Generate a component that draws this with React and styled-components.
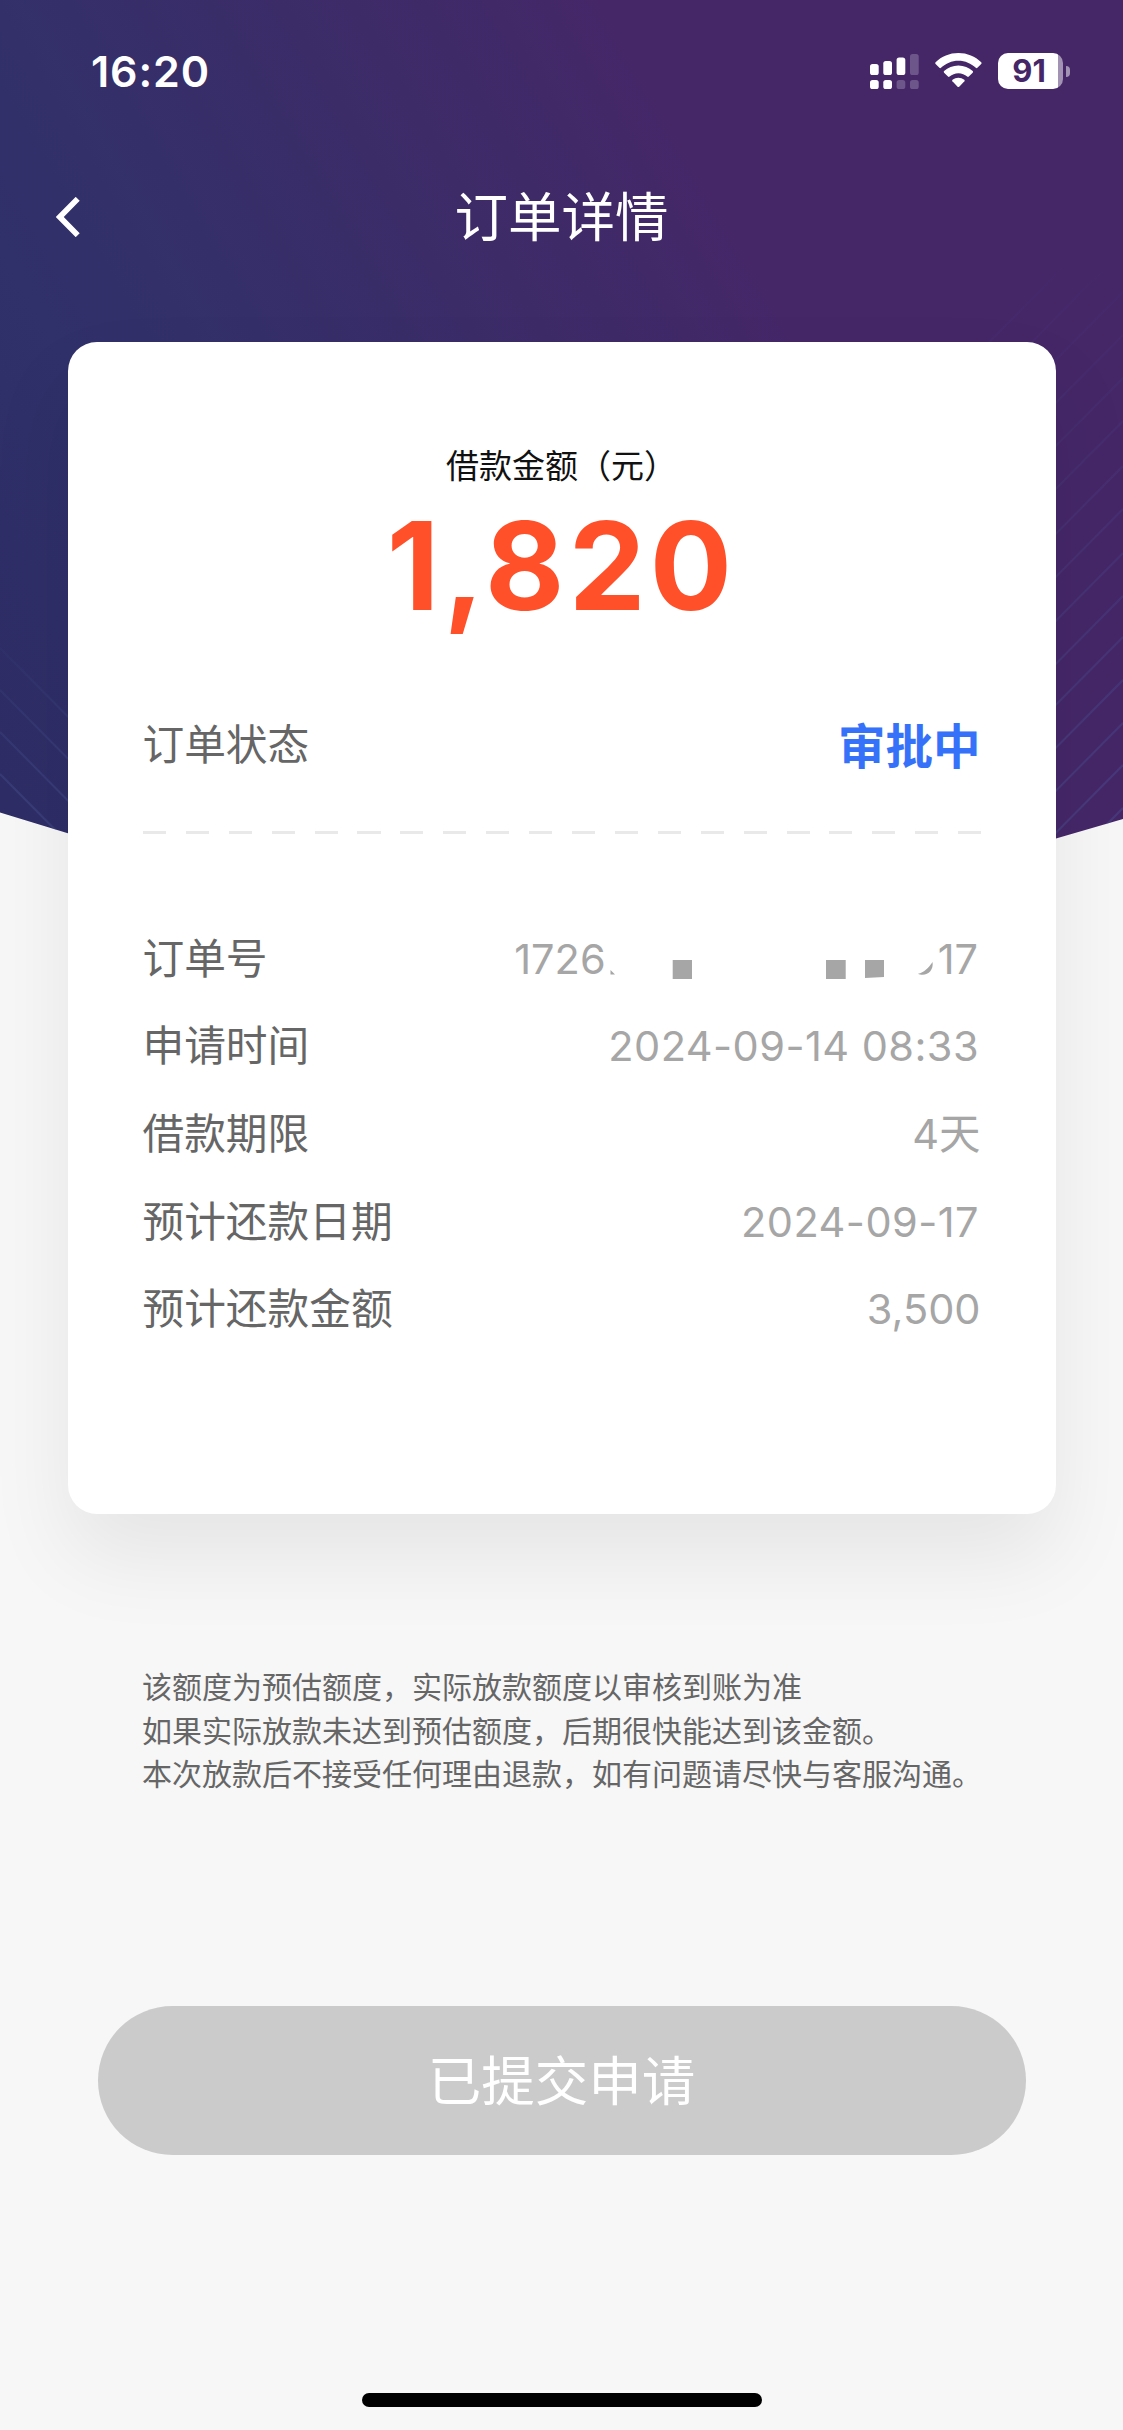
import React from 'react'
import styled, { createGlobalStyle } from 'styled-components'

const details = [
  { label: '订单号', masked: true },
  { label: '申请时间', value: '2024-09-14 08:33', date: true },
  { label: '借款期限', value: '4天' },
  { label: '预计还款日期', value: '2024-09-17', date: true },
  { label: '预计还款金额', value: '3,500' },
]

const notes = [
  '该额度为预估额度，实际放款额度以审核到账为准',
  '如果实际放款未达到预估额度，后期很快能达到该金额。',
  '本次放款后不接受任何理由退款，如有问题请尽快与客服沟通。',
]

// y at x = 1123 for the right stripes, y at x = 0 for the left ones
const rightLines = [207, 250, 292, 335, 378, 421, 466, 509, 553, 596, 637, 680, 723, 765, 808]
const leftLines = [648, 690, 732, 774]

const Backdrop = () => (
  <BackdropSvg viewBox="0 0 1123 1000">
    <defs>
      <linearGradient id="sky" gradientUnits="userSpaceOnUse" x1="-344" y1="200" x2="447" y2="-260">
        <stop offset="0" stopColor="#2e2d66" />
        <stop offset="0.3" stopColor="#30306a" />
        <stop offset="0.43" stopColor="#333069" />
        <stop offset="0.7" stopColor="#3b2c68" />
        <stop offset="0.9" stopColor="#412968" />
        <stop offset="1" stopColor="#452768" />
      </linearGradient>
      <linearGradient id="fade" gradientUnits="userSpaceOnUse" x1="0" y1="260" x2="0" y2="800">
        <stop offset="0" stopColor="#4a5a9a" stopOpacity="0" />
        <stop offset="1" stopColor="#4a5a9a" stopOpacity="0.36" />
      </linearGradient>
      <linearGradient id="fadeLeft" gradientUnits="userSpaceOnUse" x1="0" y1="640" x2="0" y2="800">
        <stop offset="0" stopColor="#4a5a9a" stopOpacity="0.04" />
        <stop offset="1" stopColor="#4a5a9a" stopOpacity="0.34" />
      </linearGradient>
      <clipPath id="shape">
        <path d="M0 0H1123V819L1056 838.5Q561 985 67 833L0 812.5Z" />
      </clipPath>
    </defs>
    <g clipPath="url(#shape)">
      <rect width="1123" height="1000" fill="url(#sky)" />
      <g stroke="url(#fade)" strokeWidth="2" fill="none">
        {rightLines.map((y) => (
          <path key={y} d={`M1123 ${y}L923 ${y + 202}`} />
        ))}
      </g>
      <g stroke="url(#fadeLeft)" strokeWidth="2" fill="none">
        {leftLines.map((y) => (
          <path key={y} d={`M0 ${y}L100 ${y + 101}`} />
        ))}
      </g>
    </g>
  </BackdropSvg>
)

const Signal = () => (
  <svg width="49" height="36" viewBox="0 0 49 36" fill="#fff">
    <rect x="0" y="11" width="8.7" height="11" rx="2.6" />
    <rect x="13.3" y="8" width="8.7" height="14" rx="2.6" />
    <rect x="26.6" y="4.4" width="8.7" height="17.6" rx="2.6" />
    <rect x="40" y="1" width="8.7" height="21" rx="2.6" opacity="0.22" />
    <rect x="0" y="27" width="8.7" height="9" rx="2.6" />
    <rect x="13.3" y="27" width="8.7" height="9" rx="2.6" />
    <rect x="26.6" y="27" width="8.7" height="9" rx="2.6" opacity="0.22" />
    <rect x="40" y="27" width="8.7" height="9" rx="2.6" opacity="0.22" />
  </svg>
)

const Wifi = () => (
  <svg width="47" height="36" viewBox="0 0 47 36" fill="#fff">
    <path d="M23.4 0C32.2 0 40.3 3.4 46.2 9.2Q47 10 46.2 10.9L42.4 14.8Q41.6 15.5 40.8 14.8C36.2 10.4 30.1 7.7 23.4 7.7S10.6 10.4 6 14.8Q5.2 15.5 4.4 14.8L.6 10.9Q-.2 10 .6 9.2C6.5 3.4 14.6 0 23.4 0Z" />
    <path d="M23.4 12.5C28.9 12.5 33.9 14.6 37.7 18.1Q38.5 18.9 37.7 19.7L33.8 23.6Q33 24.3 32.2 23.6C29.8 21.5 26.8 20.2 23.4 20.2S17 21.5 14.6 23.6Q13.8 24.3 13 23.6L9.1 19.7Q8.3 18.9 9.1 18.1C12.9 14.6 17.9 12.5 23.4 12.5Z" />
    <path d="M23.4 24.7C25.5 24.7 27.6 25.4 29.3 26.7Q30.1 27.4 29.4 28.2L24.2 33.7Q23.4 34.5 22.6 33.7L17.4 28.2Q16.7 27.4 17.5 26.7C19.2 25.4 21.3 24.7 23.4 24.7Z" />
  </svg>
)

// digits and leftovers of the order number that stay visible under the cover
const OrderNo = () => (
  <Masked>
    <span>1726</span>
    <svg width="332" height="50" viewBox="605 934 332 50" fill="#a6a6a6">
      <path d="M609.5 970L614 974.5H609.5Z" />
      <rect x="671.7" y="960" width="19.3" height="19" />
      <rect x="825" y="960" width="19.7" height="19" />
      <path d="M864 960H883V977L864 978Z" />
      <path d="M931.6 962C932.5 969.5 928 974.8 921.5 974.8C919.8 974.8 918.2 974.5 917 973.8C923 972.5 927 968.5 931.6 962Z" />
    </svg>
    <span>17</span>
  </Masked>
)

const App = () => {
  return (
    <Screen>
      <GlobalStyle />
      <Backdrop />
      <Statusbar>
        <Time>16:20</Time>
        <Indicators>
          <Signal />
          <Wifi />
          <Battery>
            <Level>91</Level>
            <Cap />
          </Battery>
        </Indicators>
      </Statusbar>

      <Navbar>
        <Back>
          <svg width="24" height="40" viewBox="0 0 24 40" fill="none" stroke="#fff" strokeWidth="5.6">
            <path d="M21.7 1.800L3.800 20L21.7 38.200" />
          </svg>
        </Back>
        <Title>订单详情</Title>
      </Navbar>

      <Card>
        <Caption>借款金额（元）</Caption>
        <Amount>1,820</Amount>
        <Staterow>
          <Label>订单状态</Label>
          <State>审批中</State>
        </Staterow>
        <Divider />
        <Details>
          {details.map((item) => (
            <Row key={item.label}>
              <Label>{item.label}</Label>
              {item.masked ? <OrderNo /> : <Value $date={item.date}>{item.value}</Value>}
            </Row>
          ))}
        </Details>
      </Card>

      <Notes>
        {notes.map((text) => (
          <Note key={text}>{text}</Note>
        ))}
      </Notes>

      <Submit disabled>已提交申请</Submit>
      <Homebar />
    </Screen>
  )
}

const GlobalStyle = createGlobalStyle`
  * {
    box-sizing: border-box;
  }
  body {
    margin: 0;
    background: #f7f7f7;
    font-family: 'Inter', 'Noto Sans CJK SC', sans-serif;
  }
`

const Screen = styled.div`
  position: relative;
  width: 1123px;
  height: 2430px;
  overflow: hidden;
  display: flex;
  flex-direction: column;
  background: #f7f7f7;
  isolation: isolate;
`
const BackdropSvg = styled.svg`
  position: absolute;
  top: 0;
  left: 0;
  z-index: -1;
  width: 1123px;
  height: 1000px;
`
const Statusbar = styled.div`
  display: flex;
  align-items: center;
  justify-content: space-between;
  height: 142px;
  padding: 0 53px 0 91px;
  color: #fff;
`
const Time = styled.div`
  font-size: 43px;
  font-weight: 600;
  line-height: 52px;
  letter-spacing: 0.9px;
`
const Indicators = styled.div`
  display: flex;
  align-items: center;
  gap: 16px;
`
const Battery = styled.div`
  display: flex;
  align-items: center;
  gap: 3px;
`
const Level = styled.div`
  width: 65px;
  height: 36px;
  padding-right: 3px;
  border-radius: 10px;
  background: linear-gradient(90deg, #fff 60px, rgba(255, 255, 255, 0.5) 60px);
  color: #452768;
  font-size: 31px;
  font-weight: 700;
  line-height: 36px;
  text-align: center;
`
const Cap = styled.div`
  width: 4px;
  height: 11px;
  border-radius: 0 5px 5px 0;
  background: rgba(255, 255, 255, 0.5);
`
const Navbar = styled.div`
  display: grid;
  grid-template-columns: 200px 1fr 200px;
  align-items: center;
  height: 149px;
`
const Back = styled.div`
  display: flex;
  padding-left: 56px;
`
const Title = styled.div`
  padding-top: 3px;
  color: #fff;
  font-size: 53.5px;
  line-height: 64px;
  text-align: center;
`
const Card = styled.div`
  flex: none;
  width: 988px;
  height: 1172.5px;
  margin: 50.5px auto 0 67.5px;
  padding: 101.5px 75px 0;
  border-radius: 29px;
  background: #fff;
  box-shadow: 0 43px 86px rgba(0, 0, 0, 0.075);
`
const Caption = styled.div`
  color: #111;
  font-size: 33px;
  line-height: 46px;
  text-align: center;
`
const Amount = styled.div`
  margin-top: 4px;
  color: #ff5029;
  font-size: 122px;
  font-weight: 700;
  line-height: 146px;
  letter-spacing: 4.2px;
  text-align: center;
`
const Staterow = styled.div`
  display: flex;
  align-items: center;
  justify-content: space-between;
  height: 60px;
  margin-top: 76px;
`
const Label = styled.div`
  color: #666;
  font-size: 41.7px;
  line-height: 56px;
`
const State = styled.div`
  padding-top: 3px;
  color: #3672f9;
  font-size: 47.5px;
  font-weight: 700;
  line-height: 60px;
`
const Divider = styled.div`
  height: 3px;
  margin-top: 56px;
  background: repeating-linear-gradient(90deg, #e9e9e9 0 23px, transparent 23px 42.9px);
`
const Details = styled.div`
  margin-top: 81px;
`
const Row = styled.div`
  display: flex;
  align-items: center;
  justify-content: space-between;
  height: 87.6px;
`
const Value = styled.div`
  padding-right: ${(props) => (props.$date ? '1.5px' : 0)};
  color: #a6a6a6;
  font-size: 41.5px;
  line-height: 56px;
  letter-spacing: ${(props) => (props.$date ? '0.45px' : 0)};
`
const Masked = styled(Value)`
  display: flex;
  align-items: center;
  padding-right: 2.5px;
`
const Notes = styled.div`
  margin-top: 152.4px;
  padding-left: 142px;
`
const Note = styled.div`
  color: #666;
  font-size: 30px;
  line-height: 43.2px;
`
const Submit = styled.button`
  flex: none;
  width: 928px;
  height: 149.5px;
  margin: 209.7px auto 0;
  padding: 4px 0 0;
  border: 0;
  border-radius: 75px;
  background: #cbcbcb;
  color: #fff;
  font-family: inherit;
  font-size: 53.5px;
  line-height: 64px;
`
const Homebar = styled.div`
  width: 400px;
  height: 14.5px;
  margin: auto auto 23px;
  border-radius: 8px;
  background: #000;
`

export default App
